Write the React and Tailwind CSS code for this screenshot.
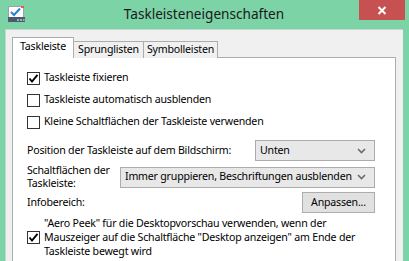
import React from 'react';

const font = { fontFamily: '"Noto Sans", "Open Sans", sans-serif' };

const Check = ({ checked }) => (
  <span className="w-[13px] h-[13px] shrink-0 border border-[#333333] bg-white flex items-center justify-center">
    {checked && (
      <svg width="11" height="11" viewBox="0 0 11 11">
        <path d="M1.5 5.5 L4 8.5 L9.5 1.8" fill="none" stroke="#000" strokeWidth="1.9" />
      </svg>
    )}
  </span>
);

const Chevron = () => (
  <svg width="9" height="6" viewBox="0 0 9 6" className="shrink-0">
    <path d="M1 1 L4.5 4.5 L8 1" fill="none" stroke="#6b6b6b" strokeWidth="1.6" />
  </svg>
);

const Dropdown = ({ value, className }) => (
  <div className={`h-[21px] border border-[#acacac] bg-[#e8e8e8] flex items-center justify-between pl-[4px] pr-[8px] ${className}`}>
    <span className="whitespace-nowrap">{value}</span>
    <Chevron />
  </div>
);

const CheckRow = ({ checked, label }) => (
  <div className="h-[22px] flex items-center gap-[4px]">
    <Check checked={checked} />
    <span>{label}</span>
  </div>
);

const WindowIcon = () => (
  <svg width="17" height="16" viewBox="0 0 17 16">
    <rect x="0.5" y="0.5" width="15" height="11" fill="#fff" stroke="#9aa3ad" />
    <rect x="13" y="0" width="3" height="2" fill="#e05a5a" />
    <path d="M3 6 L6 9 L12 2.5" fill="none" stroke="#2b7fd6" strokeWidth="2" />
    <rect x="0" y="11" width="17" height="5" fill="#4b5a6d" />
    <rect x="9" y="13" width="2" height="2" fill="#9fb0c2" />
    <rect x="12" y="13" width="2" height="2" fill="#9fb0c2" />
    <rect x="15" y="13" width="1.5" height="2" fill="#9fb0c2" />
  </svg>
);

export default function App() {
  return (
    <div className="w-[409px] h-[261px] overflow-hidden bg-[#7bd3a6] flex flex-col text-[10.6px] tracking-[-0.2px] text-black" style={font}>
      {/* title bar */}
      <div className="h-[29px] shrink-0 flex items-start">
        <div className="pl-[8px] pt-[6px]">
          <WindowIcon />
        </div>
        <div className="flex-1 text-center pt-[4px] pl-[24px] text-[13.6px] tracking-normal text-[#1a1a1a]">Taskleisteneigenschaften</div>
        <div className="w-[46px] h-[20px] bg-[#c75050] mr-[4px] flex items-center justify-center">
          <svg width="10" height="9" viewBox="0 0 10 9">
            <path d="M1.5 1 L8.5 8 M8.5 1 L1.5 8" stroke="#fff" strokeWidth="2" />
          </svg>
        </div>
      </div>

      {/* client area */}
      <div className="ml-[5px] w-[398px] flex-1 bg-[#f0f0f0] border-l border-t border-[#c8d6cf] pl-[6px] pt-[7px]">
        {/* tabs */}
        <div className="flex items-end h-[21px] relative z-10">
          <div className="h-[21px] w-[62px] bg-white border border-b-0 border-[#adadad] flex items-center justify-center pb-[2px]">Taskleiste</div>
          <div className="h-[17px] w-[70px] bg-[#f0f0f0] border border-l-0 border-b-0 border-[#adadad] flex items-center justify-center">Sprunglisten</div>
          <div className="h-[17px] w-[74px] bg-[#f0f0f0] border border-l-0 border-b-0 border-[#adadad] flex items-center justify-center">Symbolleisten</div>
        </div>

        {/* panel */}
        <div className="w-[384px] h-[220px] -mt-px bg-white border border-[#adadad] pl-[14px] pr-[20px] pt-[9px] flex flex-col">
          <CheckRow checked label="Taskleiste fixieren" />
          <CheckRow label="Taskleiste automatisch ausblenden" />
          <CheckRow label="Kleine Schaltflächen der Taskleiste verwenden" />

          <div className="mt-[7px] h-[21px] flex items-center justify-between">
            <span>Position der Taskleiste auf dem Bildschirm:</span>
            <Dropdown value="Unten" className="w-[120px]" />
          </div>

          <div className="mt-[3px] h-[26px] flex items-center">
            <div className="w-[93px] shrink-0 leading-[13px]">
              Schaltflächen der
              <br />
              Taskleiste:
            </div>
            <Dropdown value="Immer gruppieren, Beschriftungen ausblenden" className="flex-1" />
          </div>

          <div className="mt-[2px] h-[21px] flex items-center justify-between">
            <span>Infobereich:</span>
            <div className="h-[21px] w-[73px] bg-[#e1e1e1] border border-[#adadad] flex items-center justify-center">Anpassen...</div>
          </div>

          <div className="mt-[3px] flex items-center gap-[4px]">
            <Check checked />
            <div className="leading-[14px]">
              "Aero Peek" für die Desktopvorschau verwenden, wenn der Mauszeiger auf die Schaltfläche "Desktop anzeigen" am Ende der Taskleiste bewegt wird
            </div>
          </div>
        </div>
      </div>
    </div>
  );
}
